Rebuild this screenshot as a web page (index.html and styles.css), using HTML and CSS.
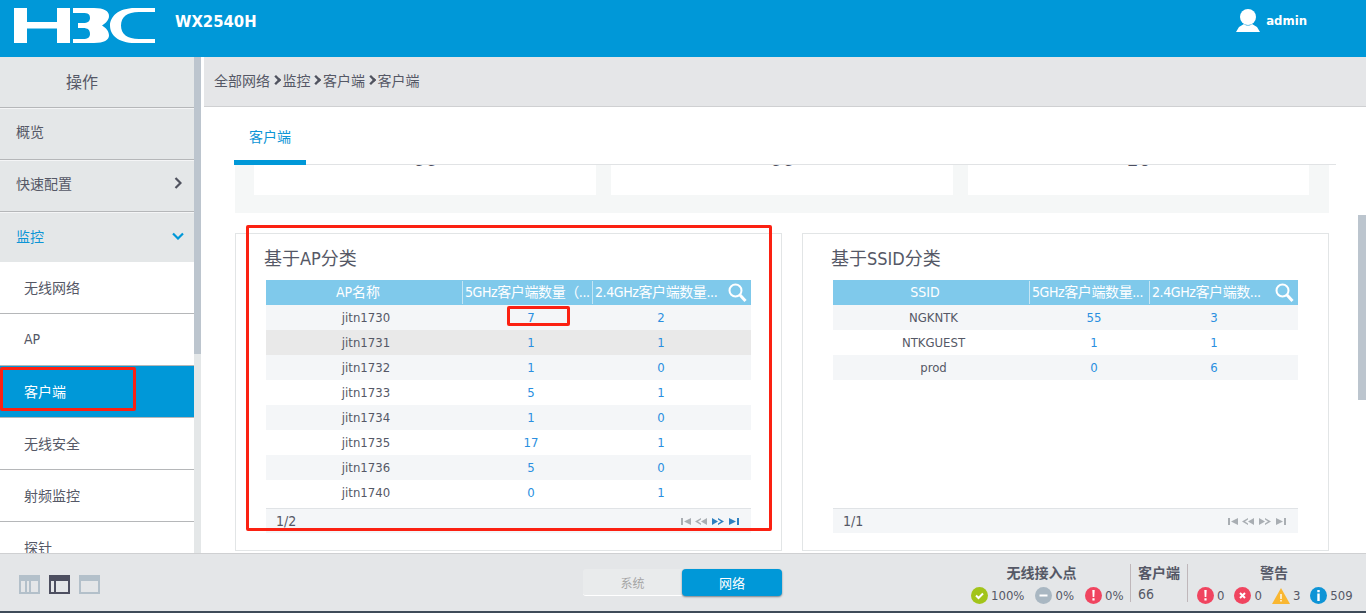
FILE: index.html
```html
<!DOCTYPE html>
<html lang="zh">
<head>
<meta charset="utf-8">
<title>H3C WX2540H</title>
<link rel="stylesheet" href="styles.css">
</head>
<body>
<div class="page">
  <header class="topbar">
    <svg class="logo" width="142" height="36" viewBox="0 0 142 36">
      <path fill="#fff" d="M0 0H13V14H43V0H56V35H43V20.500H13V35H0Z"/>
      <path fill="#fff" d="M59 0H80C90 0 95 3 95 8C95 12 92 15 88 17.500C92 20 95 23 95 27.500C95 32 90 35 80 35H59V31H69C74 31 76 29 76 26C76 22 74 20 69 20H64V15H69C74 15 76 13 76 10C76 6 74 5 69 5H59Z"/>
      <path fill="#fff" d="M141 0V4H125C113 4 107 9 107 17.500C107 26 113 31 125 31H141V35H121C104 35 96 27 96 17.500C96 9 104 0 121 0Z"/>
    </svg>
    <div class="model">WX2540H</div>
    <div class="user">
      <svg width="24" height="24" viewBox="0 0 24 24"><circle cx="12" cy="8" r="8" fill="#fff"/><path fill="#fff" d="M0 23L3 18L8 15C10 17 14 17 16 15L21 18L24 23Z"/></svg>
      <span>admin</span>
    </div>
  </header>

  <div class="middle">
    <aside class="sidebar">
      <nav class="menu">
        <div class="menu-title">操作</div>
        <div class="item">概览</div>
        <div class="item">快速配置
          <svg class="chev" width="8" height="12" viewBox="0 0 8 12"><path d="M1.500 1L6.500 6L1.500 11" fill="none" stroke="#50535f" stroke-width="2.200"/></svg>
        </div>
        <div class="item item-open">监控
          <svg class="chev" width="12" height="8" viewBox="0 0 12 8"><path d="M1 1.500L6 6.500L11 1.500" fill="none" stroke="#0098d8" stroke-width="2.200"/></svg>
        </div>
        <div class="item sub">无线网络</div>
        <div class="item sub">AP</div>
        <div class="item sub active">客户端<span class="mark mark-nav"></span></div>
        <div class="item sub">无线安全</div>
        <div class="item sub">射频监控</div>
        <div class="item sub">探针</div>
      </nav>
      <div class="side-scroll"><div class="side-thumb"></div></div>
    </aside>

    <main class="main">
      <div class="crumbs">全部网络<i class="sep"></i>监控<i class="sep"></i>客户端<i class="sep"></i>客户端</div>
      <div class="tabs"><div class="tab">客户端</div></div>
      <div class="content">
        <section class="stats">
          <div class="stat"><div class="stat-num">66</div></div>
          <div class="stat"><div class="stat-num">66</div></div>
          <div class="stat"><div class="stat-num">10</div></div>
        </section>
        <section class="panels">
          <article class="panel panel-ap">
            <h2>基于AP分类</h2>
            <div class="table">
              <div class="thead">
                <div class="th-first">AP名称</div><div class="th-cut">5GHz客户端数量（...</div><div class="th-cut">2.4GHz客户端数量...</div>
                <svg class="find" width="19" height="20" viewBox="0 0 19 20"><circle cx="7.500" cy="7.500" r="6" fill="none" stroke="#fff" stroke-width="2"/><path d="M12 12L17.500 18" stroke="#fff" stroke-width="3"/></svg>
              </div>
              <div class="tbody">
                <div class="row"><span>jitn1730</span><a>7</a><a>2</a></div>
                <div class="row row-hover"><span>jitn1731</span><a>1</a><a>1</a></div>
                <div class="row"><span>jitn1732</span><a>1</a><a>0</a></div>
                <div class="row"><span>jitn1733</span><a>5</a><a>1</a></div>
                <div class="row"><span>jitn1734</span><a>1</a><a>0</a></div>
                <div class="row"><span>jitn1735</span><a>17</a><a>1</a></div>
                <div class="row"><span>jitn1736</span><a>5</a><a>0</a></div>
                <div class="row"><span>jitn1740</span><a>0</a><a>1</a></div>
              </div>
              <div class="tfoot">
                <span>1/2</span>
                <svg class="pager" width="60" height="7" viewBox="0 0 60 7">
                  <g fill="#a9aeb3"><path d="M0 0H2V7H0ZM3 3.500L10 0V7Z"/><path d="M14 3.500L20 0V1.500L17 3.500L20 5.500V7Z"/><path d="M20 3.500L26 0V7Z"/></g>
                  <g fill="#2f80c0"><path d="M31 0L37 3.500L31 7Z"/><path d="M37 0L43 3.500L37 7V5.500L40 3.500L37 1.500Z"/><path d="M48 0L55 3.500L48 7ZM56 0H58V7H56Z"/></g>
                </svg>
              </div>
              <span class="mark mark-cell"></span>
            </div>
            <span class="mark mark-panel"></span>
          </article>

          <article class="panel panel-ssid">
            <h2>基于SSID分类</h2>
            <div class="table">
              <div class="thead">
                <div class="th-first">SSID</div><div class="th-cut">5GHz客户端数量...</div><div class="th-cut">2.4GHz客户端数...</div>
                <svg class="find" width="19" height="20" viewBox="0 0 19 20"><circle cx="7.500" cy="7.500" r="6" fill="none" stroke="#fff" stroke-width="2"/><path d="M12 12L17.500 18" stroke="#fff" stroke-width="3"/></svg>
              </div>
              <div class="tbody">
                <div class="row"><span>NGKNTK</span><a>55</a><a>3</a></div>
                <div class="row row-plain"><span>NTKGUEST</span><a>1</a><a>1</a></div>
                <div class="row"><span>prod</span><a>0</a><a>6</a></div>
              </div>
              <div class="tfoot">
                <span>1/1</span>
                <svg class="pager" width="60" height="7" viewBox="0 0 60 7">
                  <g fill="#a9aeb3"><path d="M0 0H2V7H0ZM3 3.500L10 0V7Z"/><path d="M14 3.500L20 0V1.500L17 3.500L20 5.500V7Z"/><path d="M20 3.500L26 0V7Z"/><path d="M31 0L37 3.500L31 7Z"/><path d="M37 0L43 3.500L37 7V5.500L40 3.500L37 1.500Z"/><path d="M48 0L55 3.500L48 7ZM56 0H58V7H56Z"/></g>
                </svg>
              </div>
            </div>
          </article>
        </section>
      </div>
      <div class="main-thumb"></div>
    </main>
  </div>

  <footer class="bottombar">
    <div class="views">
      <svg width="21" height="19" viewBox="0 0 21 19"><g fill="none" stroke="#b3c0ca" stroke-width="2"><rect x="1" y="1" width="19" height="17"/><path d="M1 5H20M7 5V18M11 5V18"/></g><rect x="1" y="1" width="19" height="4" fill="#b3c0ca"/></svg>
      <svg width="21" height="19" viewBox="0 0 21 19"><g fill="none" stroke="#4d4f60" stroke-width="2"><rect x="1" y="1" width="19" height="17"/><path d="M1 5H20M6 5V18"/></g><rect x="1" y="1" width="19" height="4" fill="#4d4f60"/></svg>
      <svg width="21" height="19" viewBox="0 0 21 19"><g fill="none" stroke="#b3c0ca" stroke-width="2"><rect x="1" y="1" width="19" height="17"/></g><rect x="1" y="1" width="19" height="5" fill="#b3c0ca"/></svg>
    </div>
    <div class="switch">
      <div class="sw sw-off">系统</div>
      <div class="sw sw-on">网络</div>
    </div>
    <div class="status">
      <div class="group group-ap">
        <div class="g-title">无线接入点</div>
        <div class="g-body">
          <span class="st"><svg width="17" height="17" viewBox="0 0 17 17"><circle cx="8.500" cy="8.500" r="8.500" fill="#a2c41a"/><path d="M5 8.500L7.500 11L12 6.500" fill="none" stroke="#fff" stroke-width="2"/></svg>100%</span>
          <span class="st"><svg width="17" height="17" viewBox="0 0 17 17"><circle cx="8.500" cy="8.500" r="8.500" fill="#a9b7c2"/><rect x="4.500" y="7.500" width="8" height="2" fill="#fff"/></svg>0%</span>
          <span class="st"><svg width="17" height="17" viewBox="0 0 17 17"><circle cx="8.500" cy="8.500" r="8.500" fill="#f04560"/><path d="M7.300 3H9.700L9.300 10H7.700ZM7.400 11.300H9.600V13.500H7.400Z" fill="#fff"/></svg>0%</span>
        </div>
      </div>
      <div class="group group-client">
        <div class="g-title">客户端</div>
        <div class="g-body g-count">66</div>
      </div>
      <div class="group group-alarm">
        <div class="g-title">警告</div>
        <div class="g-body">
          <span class="st"><svg width="17" height="17" viewBox="0 0 17 17"><circle cx="8.500" cy="8.500" r="8.500" fill="#f04560"/><path d="M7.300 3H9.700L9.300 10H7.700ZM7.400 11.300H9.600V13.500H7.400Z" fill="#fff"/></svg>0</span>
          <span class="st"><svg width="17" height="17" viewBox="0 0 17 17"><circle cx="8.500" cy="8.500" r="8.500" fill="#f04560"/><path d="M6 6L11 11M11 6L6 11" stroke="#fff" stroke-width="2"/></svg>0</span>
          <span class="st"><svg width="18" height="16" viewBox="0 0 18 16"><path d="M9 0L18 16H0Z" fill="#f9b732"/><path d="M8.300 6H9.700V11H8.300ZM8.300 12H9.700V13.500H8.300Z" fill="#fff"/></svg>3</span>
          <span class="st"><svg width="17" height="17" viewBox="0 0 17 17"><circle cx="8.500" cy="8.500" r="8.500" fill="#0e94d6"/><path d="M7.300 3H9.700V5.200H7.300ZM7.300 6.500H9.700V14H7.300Z" fill="#fff"/></svg>509</span>
        </div>
      </div>
    </div>
  </footer>
</div>
</body>
</html>
```
FILE: styles.css
```css
* { box-sizing: border-box; }
html, body { margin: 0; height: 100%; overflow: hidden; }
body {
  font-family: "DejaVu Sans Condensed", "DejaVu Sans", "Noto Sans CJK SC", sans-serif;
  font-stretch: condensed;
  font-size: 13px;
  color: #555866;
  background: #fff;
}
.page { display: flex; flex-direction: column; height: 613px; }

/* top bar */
.topbar { height: 57px; flex: none; background: #0098d8; display: flex; align-items: flex-start; color: #fff; }
.logo { margin: 8px 0 0 14px; flex: none; }
.model { margin: 11px 0 0 19px; font-size: 16.500px; line-height: 22px; font-weight: 700; }
.user { margin: 9px 0 0 auto; padding-right: 59px; display: flex; align-items: center; gap: 6px; font-size: 13px; font-weight: 700; line-height: 24px; height: 24px; }

/* middle */
.middle { flex: 1; min-height: 0; display: flex; }
.sidebar { width: 204px; flex: none; display: flex; background: #fff; overflow: hidden; }
.menu { width: 194px; flex: none; background: #e4e7e8; }
.menu-title { height: 51px; display: flex; align-items: center; justify-content: center; font-size: 16px; border-bottom: 1px solid #b5b7b9; padding: 0 30px 2px 0; }
.item { height: 52px; display: flex; align-items: center; justify-content: space-between; padding: 0 12px 6px 16px; font-size: 14px; border-bottom: 1px solid #b5b7b9; border-top: 1px solid #f4f5f6; position: relative; }
.item-open { height: 50px; color: #0c95d6; border-bottom: 0; padding: 0 10px 4px 16px; }
.sub { background: #fff; padding: 0 12px 2px 24px; border-top: 0; }
.active { background: #0098d8; color: #fff; }
.side-scroll { width: 7px; flex: none; background: #e4e7e8; }
.side-thumb { height: 297px; background: #bcc5ce; }

.main { flex: 1; min-width: 0; display: flex; flex-direction: column; position: relative; }
.crumbs { height: 50px; flex: none; background: #e5e6e8; border-bottom: 1px solid #cfd0d2; display: flex; align-items: center; padding: 0 0 3px 10px; font-size: 14px; }
.sep { width: 6px; height: 6px; margin: 0 4px 0 2.500px; border: solid #50535f; border-width: 2px 2px 0 0; transform: rotate(45deg) scale(1.2); }
.tabs { height: 58px; flex: none; margin: 0 30px; border-bottom: 1px solid #e1e3e5; }
.tab { width: 72px; height: 58px; border-bottom: 5px solid #0098d8; margin-bottom: -1px; color: #0c95d6; font-size: 14px; display: flex; align-items: center; justify-content: center; padding-top: 5px; }
.content { flex: 1; min-height: 0; padding: 0 37px 0 31px; overflow: hidden; }
.stats { height: 48px; background: #f5f7f7; padding: 0 20px 0 19px; display: grid; grid-template-columns: 342px 342px 341px; gap: 15px; align-items: start; }
.stat { height: 30px; background: #fff; overflow: hidden; text-align: center; }
.stat-num { margin-top: -19px; font-size: 22px; line-height: 26px; color: #4d4f60; }

.panels { margin-top: 20px; display: flex; justify-content: space-between; }
.panel { position: relative; height: 318px; border: 1px solid #e2e5e6; display: flex; flex-direction: column; padding: 0 30px; }
.panel-ap { width: 547px; }
.panel-ssid { width: 527px; }
.panel h2 { margin: 13px 0 0 -2px; font-size: 18px; line-height: 24px; height: 33px; font-weight: 400; color: #555866; }
.table { position: relative; flex: 1; min-height: 0; display: flex; flex-direction: column; margin-bottom: 17px; }
.thead { height: 25px; flex: none; background: #7fc9eb; color: #fff; display: grid; align-items: center; position: relative; font-size: 14px; text-align: center; }
.panel-ap .thead { grid-template-columns: 196px 130px 1fr; }
.panel-ssid .thead { grid-template-columns: 196px 120px 1fr; }
.thead > div { height: 23px; line-height: 22px; white-space: nowrap; overflow: hidden; }
.th-first { padding-right: 12px; }
.th-cut { border-left: 1px solid #c5e5f4; text-align: left; padding-left: 2px; letter-spacing: -.4px; }
.find { position: absolute; right: 4px; top: 3px; }
.tbody { flex: 1; }
.row { height: 25px; display: grid; align-items: center; text-align: center; font-size: 13px; background: #fff; }
.panel-ap .row { grid-template-columns: 200px 130px 130px 1fr; }
.panel-ssid .row { grid-template-columns: 201px 120px 120px 1fr; }
.row:nth-child(odd) { background: #f4f6f8; }
.row-hover { background: #e9e9e9; }
.row a { color: #2a8fe0; }
.tfoot { height: 25px; flex: none; background: #f4f6f8; border-top: 1px solid #e0e3e6; display: flex; align-items: center; justify-content: space-between; padding: 0 10px; font-size: 14px; }
.main-thumb { position: absolute; right: 0; top: 158px; width: 8px; height: 185px; background: #bcc5ce; }

/* annotations */
.mark { position: absolute; border: 3px solid #fb2112; border-radius: 2px; pointer-events: none; }
.mark-nav { left: 0; top: 1px; width: 136px; height: 44px; }
.mark-cell { left: 241px; top: 26px; width: 63px; height: 20px; }
.mark-panel { left: 10px; top: -9px; width: 526px; height: 306px; }

/* bottom bar */
.bottombar { height: 60px; flex: none; background: #e4e6e8; border-top: 1px solid #cfd0d2; border-bottom: 2px solid #3e4a58; display: flex; align-items: center; position: relative; }
.views { display: flex; gap: 9px; margin: 4px 0 0 19px; width: 564px; }
.switch { width: 199px; height: 27px; display: flex; }
.sw { flex: none; display: flex; align-items: center; justify-content: center; font-size: 12px; }
.sw-off { width: 99px; background: #e9ebec; color: #a5a5a5; border-bottom: 1px solid #fff; border-radius: 3px 0 0 3px; }
.sw-on { width: 100px; background: #0098d8; color: #fff; border-radius: 4px; box-shadow: 0 1px 2px #7a8288; font-size: 13px; }
.status { margin-left: auto; display: flex; height: 38px; padding-right: 30px; }
.group { display: flex; flex-direction: column; }
.group + .group { border-left: 1px solid #bfb7ba; }
.group-ap { width: 159px; align-items: center; }
.group-client { width: 57px; padding-left: 7px; }
.group-alarm { width: 149px; padding-left: 9px; }
.g-title { font-size: 14px; font-weight: 700; line-height: 18px; text-align: center; }
.group-ap .g-title { width: 100%; padding-right: 18px; }
.group-client .g-title { text-align: left; }
.group-alarm .g-title { padding-left: 15px; }
.g-body { display: flex; align-items: center; font-size: 13px; line-height: 18px; height: 20px; margin-top: 5px; }
.g-count { margin-top: 3px; font-size: 14px; }
.group-ap .g-body { gap: 11px; width: 100%; }
.group-alarm .g-body { gap: 10px; }
.st { display: flex; align-items: center; gap: 3px; white-space: nowrap; }
```
